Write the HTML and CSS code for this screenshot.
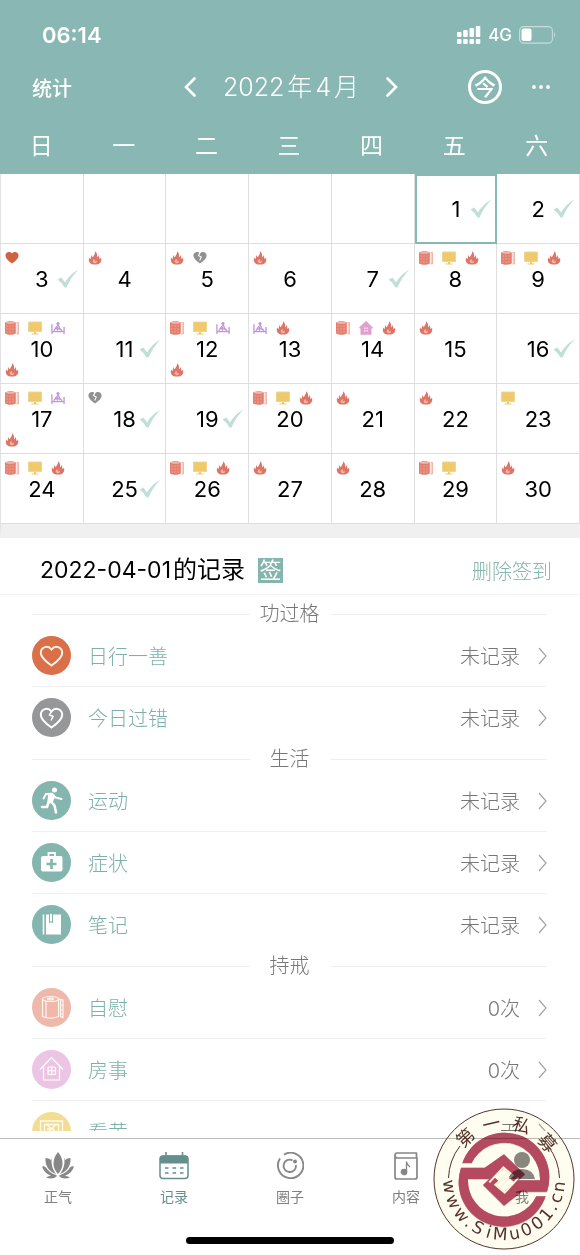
FILE: index.html
```html
<!DOCTYPE html>
<html lang="zh-CN">
<head>
<meta charset="utf-8">
<meta name="viewport" content="width=device-width, initial-scale=1">
<title>记录</title>
<link rel="stylesheet" href="styles.css">
</head>
<body>
<svg class="sprite" aria-hidden="true">
  <symbol id="check" viewBox="0 0 22 20"><path d="M0.500 10.500 4.500 8.500 8 13.500Q13 5 21.500 0.500 14 8 9.500 18.500H7.500Q5 13.500 0.500 10.500Z" fill="#c0dfd8"/></symbol>
  <symbol id="fire" viewBox="0 0 14 14"><path d="M7 .3C9.500 2 9 4.500 9.300 6.300 10.300 6 10.300 4.800 10 4 11.500 5 11.300 6.800 11.300 7.800 12.500 7.800 12.800 7 12.900 6.500 14 9.500 13 13.600 7 13.600S0 9.500 1.300 6.200C1.500 7.300 2 7.800 2.900 7.800 2.700 6.500 3 5 4 4 4 5.500 4.300 6.200 5 6.300 5.300 4.300 7.600 3 7 .3Z" fill="#dd7566"/><path d="M7 8C7.600 9.200 6.500 9.600 6.600 10.400 7.600 10.500 8 10 8 9.400 9.200 10 9.300 12 7 12.200 4.700 12.200 4.300 10.800 5 9.600 5.300 9.200 5.100 8.900 5.100 8.600 6 9 6.800 8.800 7 8Z" fill="#f4b7a9"/></symbol>
  <symbol id="heart" viewBox="0 0 14 14"><path d="M7 12.500C3 9.800.4 7.300.4 4.600.4 1 4.800-.2 7 2.500 9.200-.2 13.600 1 13.600 4.600 13.600 7.300 11 9.800 7 12.500Z" fill="#cf6240"/></symbol>
  <symbol id="broken" viewBox="0 0 14 14"><path d="M7 12.500C3 9.800.4 7.300.4 4.600.4 1 4.800-.2 7 2.500 9.200-.2 13.600 1 13.600 4.600 13.600 7.300 11 9.800 7 12.500Z" fill="#919191"/><path d="M7 1.500 5.500 4.500 8.200 6 6.700 9.500" fill="none" stroke="#fff" stroke-width="1.100"/></symbol>
  <symbol id="roll" viewBox="0 0 14 14"><path d="M0 1.500C3-.3 8-.3 10.800 1.500V12.500C8 14.200 3 14.200 0 12.500Z" fill="#e37f6e"/><ellipse cx="5.400" cy="1.700" rx="4.500" ry="1" fill="#f3b8aa"/><path d="M1 5H10M1 8H10M1 11H9" stroke="#f5b9a9" stroke-width=".6" stroke-dasharray="2 1"/><path d="M11.500 1.500H13.500V13H11.500" fill="#f6d1c8" stroke="#e9a092" stroke-width=".7"/></symbol>
  <symbol id="tv" viewBox="0 0 14 14"><path d="M.5 1H13.500V10.500H.5Z" fill="#efc96a" stroke="#ecd694"/><path d="M6 11H8V12.500H10.500V13.500H3.500V12.500H6Z" fill="#efc96a"/></symbol>
  <symbol id="bed" viewBox="0 0 15 14"><path d="M1 3V13.500M1 10.800H14M14 6V13.500M3 10 6 5.500 8 4 10 9.500M4 8H10L12 10M7 6V10" fill="none" stroke="#c096d8" stroke-width="1.400"/><circle cx="7.500" cy="2.200" r="1.700" fill="#c096d8"/></symbol>
  <symbol id="hut" viewBox="0 0 14 14"><path d="M7 0 14 6.500 13 7.700 12.500 7.300V13.800H1.500V7.300L1 7.700 0 6.500Z" fill="#e0a0d0"/><path d="M5 6.500H6.500V8H5ZM7.500 6.500H9V8H7.500ZM5 9H6.500V10.500H5ZM7.500 9H9V10.500H7.500Z" fill="#fae3f4"/></symbol>
  <symbol id="chev" viewBox="0 0 9 18"><path d="M1 1 8 9 1 17" fill="none" stroke="#a4a4a4" stroke-width="1.200"/></symbol>
</svg>

<div class="app">
  <header class="top">
    <div class="status">
      <span class="clock">06:14</span>
      <span class="signal">
        <svg width="24" height="18" viewBox="0 0 24 18" fill="#fff"><rect x="0" y="6" width="4.500" height="5" rx="1"/><rect x="6.200" y="4" width="4.500" height="7" rx="1"/><rect x="12.500" y="2" width="4.500" height="9" rx="1"/><rect x="18.800" y="0" width="4.500" height="11" rx="1"/><rect x="0" y="13" width="4.500" height="5" rx="1"/><rect x="6.200" y="13" width="4.500" height="5" rx="1"/><rect x="12.500" y="13" width="4.500" height="5" rx="1"/><rect x="18.800" y="13" width="4.500" height="5" rx="1"/></svg>
        <span>4G</span>
        <svg width="37" height="18" viewBox="0 0 37 18"><rect x=".6" y=".6" width="32.800" height="16.500" rx="4" fill="none" stroke="#c4dedb" stroke-width="1.100"/><rect x="2.500" y="2.500" width="10" height="12.500" rx="2" fill="#fff"/><path d="M35 6Q37 9 35 12Z" fill="#c4dedb"/></svg>
      </span>
    </div>
    <nav class="nav">
      <a class="stats" href="#stats">统计</a>
      <div class="month">
        <button type="button" aria-label="上个月"><svg width="12" height="20" viewBox="0 0 12 20"><path d="M10.500 1.500 2 10 10.500 18.500" fill="none" stroke="#fff" stroke-width="2.600" stroke-linecap="round"/></svg></button>
        <h1><span>2022</span><span>年</span><span>4</span><span>月</span></h1>
        <button type="button" aria-label="下个月"><svg width="12" height="20" viewBox="0 0 12 20"><path d="M1.500 1.500 10 10 1.500 18.500" fill="none" stroke="#fff" stroke-width="2.600" stroke-linecap="round"/></svg></button>
      </div>
      <div class="tools">
        <button class="today" type="button">今</button>
        <button type="button" aria-label="更多"><svg width="18" height="6" viewBox="0 0 18 6" fill="#fff"><circle cx="2" cy="3" r="1.900"/><circle cx="9" cy="3" r="1.900"/><circle cx="16" cy="3" r="1.900"/></svg></button>
      </div>
    </nav>
    <div class="week"><span>日</span><span>一</span><span>二</span><span>三</span><span>四</span><span>五</span><span>六</span></div>
  </header>

  <section class="cal" aria-label="日历">
    <span class="day"></span><span class="day"></span><span class="day"></span><span class="day"></span><span class="day"></span>
    <button class="day sel" type="button"><b>1</b><svg class="ck"><use href="#check"/></svg></button>
    <button class="day" type="button"><b>2</b><svg class="ck"><use href="#check"/></svg></button>

    <button class="day" type="button"><i class="marks"><svg><use href="#heart"/></svg></i><b>3</b><svg class="ck"><use href="#check"/></svg></button>
    <button class="day" type="button"><i class="marks"><svg><use href="#fire"/></svg></i><b>4</b></button>
    <button class="day" type="button"><i class="marks"><svg><use href="#fire"/></svg><svg><use href="#broken"/></svg></i><b>5</b></button>
    <button class="day" type="button"><i class="marks"><svg><use href="#fire"/></svg></i><b>6</b></button>
    <button class="day" type="button"><b>7</b><svg class="ck"><use href="#check"/></svg></button>
    <button class="day" type="button"><i class="marks"><svg><use href="#roll"/></svg><svg><use href="#tv"/></svg><svg><use href="#fire"/></svg></i><b>8</b></button>
    <button class="day" type="button"><i class="marks"><svg><use href="#roll"/></svg><svg><use href="#tv"/></svg><svg><use href="#fire"/></svg></i><b>9</b></button>

    <button class="day" type="button"><i class="marks"><svg><use href="#roll"/></svg><svg><use href="#tv"/></svg><svg><use href="#bed"/></svg><svg><use href="#fire"/></svg></i><b>10</b></button>
    <button class="day" type="button"><b>11</b><svg class="ck"><use href="#check"/></svg></button>
    <button class="day" type="button"><i class="marks"><svg><use href="#roll"/></svg><svg><use href="#tv"/></svg><svg><use href="#bed"/></svg><svg><use href="#fire"/></svg></i><b>12</b></button>
    <button class="day" type="button"><i class="marks"><svg><use href="#bed"/></svg><svg><use href="#fire"/></svg></i><b>13</b></button>
    <button class="day" type="button"><i class="marks"><svg><use href="#roll"/></svg><svg><use href="#hut"/></svg><svg><use href="#fire"/></svg></i><b>14</b></button>
    <button class="day" type="button"><i class="marks"><svg><use href="#fire"/></svg></i><b>15</b></button>
    <button class="day" type="button"><b>16</b><svg class="ck"><use href="#check"/></svg></button>

    <button class="day" type="button"><i class="marks"><svg><use href="#roll"/></svg><svg><use href="#tv"/></svg><svg><use href="#bed"/></svg><svg><use href="#fire"/></svg></i><b>17</b></button>
    <button class="day" type="button"><i class="marks"><svg><use href="#broken"/></svg></i><b>18</b><svg class="ck"><use href="#check"/></svg></button>
    <button class="day" type="button"><b>19</b><svg class="ck"><use href="#check"/></svg></button>
    <button class="day" type="button"><i class="marks"><svg><use href="#roll"/></svg><svg><use href="#tv"/></svg><svg><use href="#fire"/></svg></i><b>20</b></button>
    <button class="day" type="button"><i class="marks"><svg><use href="#fire"/></svg></i><b>21</b></button>
    <button class="day" type="button"><i class="marks"><svg><use href="#fire"/></svg></i><b>22</b></button>
    <button class="day" type="button"><i class="marks"><svg><use href="#tv"/></svg></i><b>23</b></button>

    <button class="day" type="button"><i class="marks"><svg><use href="#roll"/></svg><svg><use href="#tv"/></svg><svg><use href="#fire"/></svg></i><b>24</b></button>
    <button class="day" type="button"><b>25</b><svg class="ck"><use href="#check"/></svg></button>
    <button class="day" type="button"><i class="marks"><svg><use href="#roll"/></svg><svg><use href="#tv"/></svg><svg><use href="#fire"/></svg></i><b>26</b></button>
    <button class="day" type="button"><i class="marks"><svg><use href="#fire"/></svg></i><b>27</b></button>
    <button class="day" type="button"><i class="marks"><svg><use href="#fire"/></svg></i><b>28</b></button>
    <button class="day" type="button"><i class="marks"><svg><use href="#roll"/></svg><svg><use href="#tv"/></svg></i><b>29</b></button>
    <button class="day" type="button"><i class="marks"><svg><use href="#fire"/></svg></i><b>30</b></button>
  </section>

  <div class="head">
    <h2>2022-04-01<span>的记录</span></h2>
    <span class="tag">签</span>
    <button class="remove" type="button">删除签到</button>
  </div>

  <main class="list">
    <h3 class="group"><span>功过格</span></h3>
    <a class="row" href="#good"><svg class="ic" viewBox="0 0 39 39"><circle cx="19.500" cy="19.500" r="19.500" fill="#da7049"/><path d="M19.500 29.500C13 25 8.800 21.500 8.800 17 8.800 10.500 16 9 19.500 13.500 23 9 30.200 10.500 30.200 17 30.200 21.500 26 25 19.500 29.500Z" fill="none" stroke="#fff3e6" stroke-width="2"/></svg><span class="name">日行一善</span><span class="val">未记录</span><svg class="go"><use href="#chev"/></svg></a>
    <a class="row" href="#fault"><svg class="ic" viewBox="0 0 39 39"><circle cx="19.500" cy="19.500" r="19.500" fill="#969798"/><path d="M19.500 29.500C13 25 8.800 21.500 8.800 17 8.800 10.500 16 9 19.500 13.500 23 9 30.200 10.500 30.200 17 30.200 21.500 26 25 19.500 29.500Z" fill="none" stroke="#fff" stroke-width="2"/><path d="M19.500 13.500 17.500 17 21 18.500 19 22.500" fill="none" stroke="#fff" stroke-width="1.500"/></svg><span class="name">今日过错</span><span class="val">未记录</span><svg class="go"><use href="#chev"/></svg></a>
    <h3 class="group"><span>生活</span></h3>
    <a class="row" href="#sport"><svg class="ic" viewBox="0 0 39 39"><circle cx="19.500" cy="19.500" r="19.500" fill="#84b5ae"/><circle cx="22.500" cy="9" r="2.500" fill="#fff"/><path d="M11.500 17.500 14 13 20 12.700 23.500 16.500 29.500 18" fill="none" stroke="#fff" stroke-width="2" stroke-linecap="round" stroke-linejoin="round"/><path d="M16 13H22L22.500 17.500 20 22.500 15.500 21.500Z" fill="#fff"/><path d="M17 20 15 26H10M19 20.500 22.500 24.500 24 31.500" fill="none" stroke="#fff" stroke-width="2.600" stroke-linecap="round"/></svg><span class="name">运动</span><span class="val">未记录</span><svg class="go"><use href="#chev"/></svg></a>
    <a class="row" href="#symptom"><svg class="ic" viewBox="0 0 39 39"><circle cx="19.500" cy="19.500" r="19.500" fill="#84b5ae"/><rect x="9" y="13" width="21.500" height="15.500" rx="2" fill="#fff"/><path d="M16.500 13V10H23V13" fill="none" stroke="#fff" stroke-width="1.800"/><path d="M19.500 16V26M14.500 21H24.500" stroke="#84b5ae" stroke-width="2.600"/></svg><span class="name">症状</span><span class="val">未记录</span><svg class="go"><use href="#chev"/></svg></a>
    <a class="row" href="#notes"><svg class="ic" viewBox="0 0 39 39"><circle cx="19.500" cy="19.500" r="19.500" fill="#84b5ae"/><path d="M11.500 9.500V29.500" stroke="#fff" stroke-width="1.600"/><path d="M14 9.500H29V29.500H14Z" fill="#fff"/><path d="M17.500 8.500H20.500V18L19 16.500 17.500 18Z" fill="#fff" stroke="#84b5ae"/></svg><span class="name">笔记</span><span class="val">未记录</span><svg class="go"><use href="#chev"/></svg></a>
    <h3 class="group"><span>持戒</span></h3>
    <a class="row" href="#self"><svg class="ic" viewBox="0 0 39 39"><circle cx="19.500" cy="19.500" r="19.500" fill="#f0b7ab"/><g fill="none" stroke="#fff6f0" stroke-width="1.200"><ellipse cx="18.500" cy="11" rx="8" ry="2.500"/><ellipse cx="18.500" cy="11" rx="3" ry=".8"/><path d="M10.500 11V28.500Q18 32 26.500 28.500V11L31 12V29.500L28.500 28.500V11.500M14 14V29M28.500 17H31M28.500 22H31M28.500 26H31"/></g></svg><span class="name">自慰</span><span class="val">0次</span><svg class="go"><use href="#chev"/></svg></a>
    <a class="row" href="#room"><svg class="ic" viewBox="0 0 39 39"><circle cx="19.500" cy="19.500" r="19.500" fill="#edc5e4"/><g fill="none" stroke="#fff" stroke-width="1.200"><path d="M8 19.500 19.500 7.500 31 19.500M11.500 17V30H27.500V17"/><rect x="16" y="17" width="7.500" height="7.500" rx="1"/><path d="M19.750 17V24.500M16 20.750H23.500"/></g></svg><span class="name">房事</span><span class="val">0次</span><svg class="go"><use href="#chev"/></svg></a>
    <a class="row" href="#watch"><svg class="ic" viewBox="0 0 39 39"><circle cx="19.500" cy="19.500" r="19.500" fill="#f3dc94"/><g fill="none" stroke="#fffbe9" stroke-width="1.300"><path d="M8.500 9H30.500V26H8.500Z"/><path d="M12.500 12.500H26.500V23H12.500ZM14 22 24 12.500M15 13 20 17 25 21M15 17H22"/></g></svg><span class="name">看黄</span><span class="val">无</span><svg class="go"><use href="#chev"/></svg></a>
  </main>

  <footer class="foot">
    <nav class="tabs">
      <a href="#zq"><svg width="32" height="28" viewBox="0 0 32 28" fill="#878787"><path d="M16 0C22 7 22 16 16 22 10 16 10 7 16 0Z"/><path d="M10.200 4.500C8.500 10 10 17 14 22 6 19 3 13 3.500 6Q7 6 9 8ZM21.800 4.500C23.500 10 22 17 18 22 26 19 29 13 28.500 6Q25 6 23 8Z"/><path d="M0 14.500Q2 14 3.500 15C6 19 10 22 15 23.500 13 25.500 10 26 7.500 25 9 24.500 9 24 8.500 23.500 4 22 1.500 18.500 0 14.500ZM32 14.500Q30 14 28.500 15C26 19 22 22 17 23.500 19 25.500 22 26 24.500 25 23 24.500 23 24 23.500 23.500 28 22 30.500 18.500 32 14.500Z"/><path d="M4 25.500Q8 22.500 15 24.500 10 28 4 25.500ZM28 25.500Q24 22.500 17 24.500 22 28 28 25.500Z"/></svg>正气</a>
      <a class="on" href="#record"><svg width="30" height="28" viewBox="0 0 30 28"><rect x="1" y="4" width="28" height="22.500" rx="3" fill="none" stroke="#648f8c" stroke-width="1.500"/><path d="M1 11.500V6Q1 3.500 4 3.500H26Q29 3.500 29 6V11.500Z" fill="#648f8c"/><path d="M7 0V5M23.500 0V5" stroke="#648f8c" stroke-width="1.600"/><path d="M6 16H9.500M13.500 16H17M21 16H24.500M6 21H9.500M13.500 21H17M21 21H24.500" stroke="#648f8c" stroke-width="1.600"/></svg>记录</a>
      <a href="#circle"><svg width="28" height="28" viewBox="0 0 28 28" fill="none" stroke="#878787" stroke-width="1.900"><path d="M8 2.600A12.700 12.700 0 1 1 4 6.500"/><path d="M16.500 8.300A6.200 6.200 0 1 0 19.900 13"/><circle cx="19" cy="9.500" r="2" fill="#878787" stroke="none"/></svg>圈子</a>
      <a href="#content"><svg width="24" height="28" viewBox="0 0 24 28" fill="none" stroke="#878787" stroke-width="1.700"><path d="M23 1H3Q1 1 1 3.500V25Q1 27 3 27H21Q23 27 23 25V6H3.500Q1 6 1 3.500M22.500 1V6"/><circle cx="10" cy="20" r="2.500" fill="#878787"/><path d="M12.500 20V9.500Q13 13 16 15" stroke-width="1.300"/></svg>内容</a>
      <a href="#me"><svg width="26" height="28" viewBox="0 0 26 28" fill="#878787"><circle cx="13" cy="8" r="8"/><path d="M0 27Q2 17 13 17T26 27Z"/></svg>我</a>
    </nav>
    <div class="home"></div>
  </footer>

  <svg class="seal" viewBox="0 0 142 142" role="img" aria-label="第一私募 www.SiMu001.cn">
    <defs><filter id="soft"><feDropShadow dx="0" dy="1" stdDeviation="1" flood-color="#3a1010" flood-opacity=".5"/></filter></defs>
    <circle cx="71" cy="71" r="70" fill="#fffdf0" stroke="#56322a"/>
    <path d="M15.500 70A55.500 55.500 0 0 1 27 38M126.500 70A55.500 55.500 0 0 0 115 38" fill="none" stroke="#56322a"/>
    <g transform="translate(-12.330 -13.660) scale(.3333)">
      <g fill="#b54a61" filter="url(#soft)">
        <path d="M125 206A134 134 0 0 1 379 292H304L250 334 187 272 216 244 236 262 226 272 250 292 290 258H358A108 108 0 0 0 153 206Z"/>
        <path d="M375 306A134 134 0 0 1 121 220H192L250 180 313 240 284 266 264 248 272 242 250 222 210 254H142A108 108 0 0 0 347 306Z"/>
      </g>
      <path d="M206 264 248 219 276 243 244 272 M294 250 252 295 224 271 256 242" fill="none" stroke="#fff3d9" stroke-width="6"/>
    </g>
    <g class="seal-cn">
      <text x="71" y="21" transform="rotate(-43 71 71)">第</text><text x="71" y="21" transform="rotate(-13 71 71)">一</text><text x="71" y="21" transform="rotate(18 71 71)">私</text><text x="71" y="21" transform="rotate(50 71 71)">募</text>
    </g>
    <g class="seal-url">
      <text x="71" y="132" transform="rotate(82 71 71)">w</text><text x="71" y="132" transform="rotate(66 71 71)">w</text><text x="71" y="132" transform="rotate(50 71 71)">w</text><text x="71" y="132" transform="rotate(39 71 71)">.</text><text x="71" y="132" transform="rotate(28 71 71)">S</text><text x="71" y="132" transform="rotate(16 71 71)">i</text><text x="71" y="132" transform="rotate(4 71 71)">M</text><text x="71" y="132" transform="rotate(-11 71 71)">u</text><text x="71" y="132" transform="rotate(-24 71 71)">0</text><text x="71" y="132" transform="rotate(-37 71 71)">0</text><text x="71" y="132" transform="rotate(-50 71 71)">1</text><text x="71" y="132" transform="rotate(-60 71 71)">.</text><text x="71" y="132" transform="rotate(-70 71 71)">c</text><text x="71" y="132" transform="rotate(-82 71 71)">n</text>
    </g>
  </svg>
</div>
</body>
</html>
```
FILE: styles.css
```css
* { box-sizing: border-box; }
body { margin: 0; background: #fff; color: #000; font-family: Inter, "Noto Sans CJK SC", sans-serif; }
h1, h2, h3 { margin: 0; font-weight: 400; }
button { margin: 0; padding: 0; border: 0; background: none; color: inherit; font: inherit; }
a { color: inherit; text-decoration: none; }
svg { display: block; }
.sprite { display: none; }
.app { display: flex; flex-direction: column; height: 100vh; position: relative; overflow: hidden; }

.top { background: #89b8b4; color: #fff; padding-top: 16px; flex: none; }
.status { display: flex; justify-content: space-between; align-items: center; height: 38px; padding: 0 24px 0 42px; }
.clock { font-size: 22px; font-weight: 600; }
.signal { display: flex; align-items: center; gap: 7px; font-size: 17px; font-weight: 500; }
.nav { display: grid; grid-template-columns: 1fr auto 1fr; align-items: center; height: 66px; padding: 0 30px 0 32px; }
.nav button { display: grid; place-items: center; }
.stats { font-size: 20px; font-weight: 500; }
.month { display: flex; align-items: center; gap: 27px; }
.month h1 { display: flex; align-items: center; gap: 3px; font-size: 25px; line-height: 30px; font-weight: 300; }
.tools { display: flex; align-items: center; justify-content: flex-end; gap: 30px; }
.nav .today { width: 34px; height: 34px; border: 3px solid #fff; border-radius: 50%; font-size: 22px; line-height: 26px; font-weight: 500; }
.week { display: grid; grid-template-columns: repeat(7, 1fr); height: 54px; line-height: 52px; text-align: center; font-size: 23px; font-weight: 400; padding-right: 2px; }

.cal { display: grid; grid-template-columns: repeat(7, 1fr); grid-auto-rows: 70px; border-left: 1px solid #e2e2e4; border-bottom: 14px solid #f0f0f0; flex: none; }
.day { display: grid; grid-template: 1fr / 1fr; align-items: center; border-right: 1px solid #dedee0; border-bottom: 1px solid #dedee0; }
.day > * { grid-area: 1 / 1; }
.day b { font-size: 22px; font-weight: 400; text-align: center; }
.sel { border: 2px solid #89b8b4; }
.ck { width: 22px; height: 20px; justify-self: end; margin-right: 4px; }
.sel .ck { margin-right: 3px; }
.marks { display: grid; grid-template-columns: repeat(3, 14px); column-gap: 9px; row-gap: 28px; align-self: start; padding: 7px 0 0 4px; }
.marks svg { width: 14px; height: 14px; }

.head { display: flex; align-items: center; height: 57px; padding: 8px 28px 0 40px; border-bottom: 1px solid #f4f4f4; flex: none; }
.head h2 { font-size: 23px; line-height: 30px; }
.head h2 span { font-size: 24px; margin-left: 2px; }
.tag { width: 25px; height: 25px; margin-left: 13px; background: #84b5ae; color: #fff; font-size: 22px; line-height: 24px; text-align: center; }
.remove { margin-left: auto; color: #84b5ae; font-size: 20px; font-weight: 300; }

.list { flex: 1; min-height: 0; overflow: hidden; margin-bottom: 7px; padding: 9px 33px 0 32px; }
.group { display: flex; align-items: center; height: 21px; color: #777; font-size: 20px; line-height: 21px; font-weight: 300; }
.group span { min-width: 80px; text-align: center; }
.group::before, .group::after { content: ""; flex: 1; height: 1px; background: #efefef; }
.row { display: flex; align-items: center; height: 62px; font-size: 20px; font-weight: 300; border-bottom: 1px solid #f0f0f0; }
.row:has(+ .group) { border-bottom-color: transparent; }
.ic { width: 39px; height: 39px; }
.name { margin-left: 17px; color: #7cb0a9; }
.val { margin-left: auto; color: #777; }
.go { width: 9px; height: 18px; margin-left: 18px; }

.foot { flex: none; height: 117px; border-top: 1px solid #bcbcbc; background: #fff; display: flex; flex-direction: column; justify-content: space-between; align-items: center; padding: 13px 0 11px; }
.tabs { display: grid; grid-template-columns: repeat(5, 1fr); width: 100%; color: #808080; font-size: 14px; line-height: 20px; }
.tabs a { display: flex; flex-direction: column; align-items: center; gap: 7px; }
.tabs .on { color: #648f8c; }
.home { width: 36%; height: 7px; border-radius: 4px; background: #000; }

.seal { position: absolute; right: 5px; bottom: 5px; width: 142px; height: 142px; mix-blend-mode: multiply; pointer-events: none; }
.seal text { text-anchor: middle; fill: #56322a; }
.seal-cn { font: 18px "Noto Sans CJK SC", sans-serif; }
.seal-url { font: 17px "DejaVu Sans", sans-serif; }
```
